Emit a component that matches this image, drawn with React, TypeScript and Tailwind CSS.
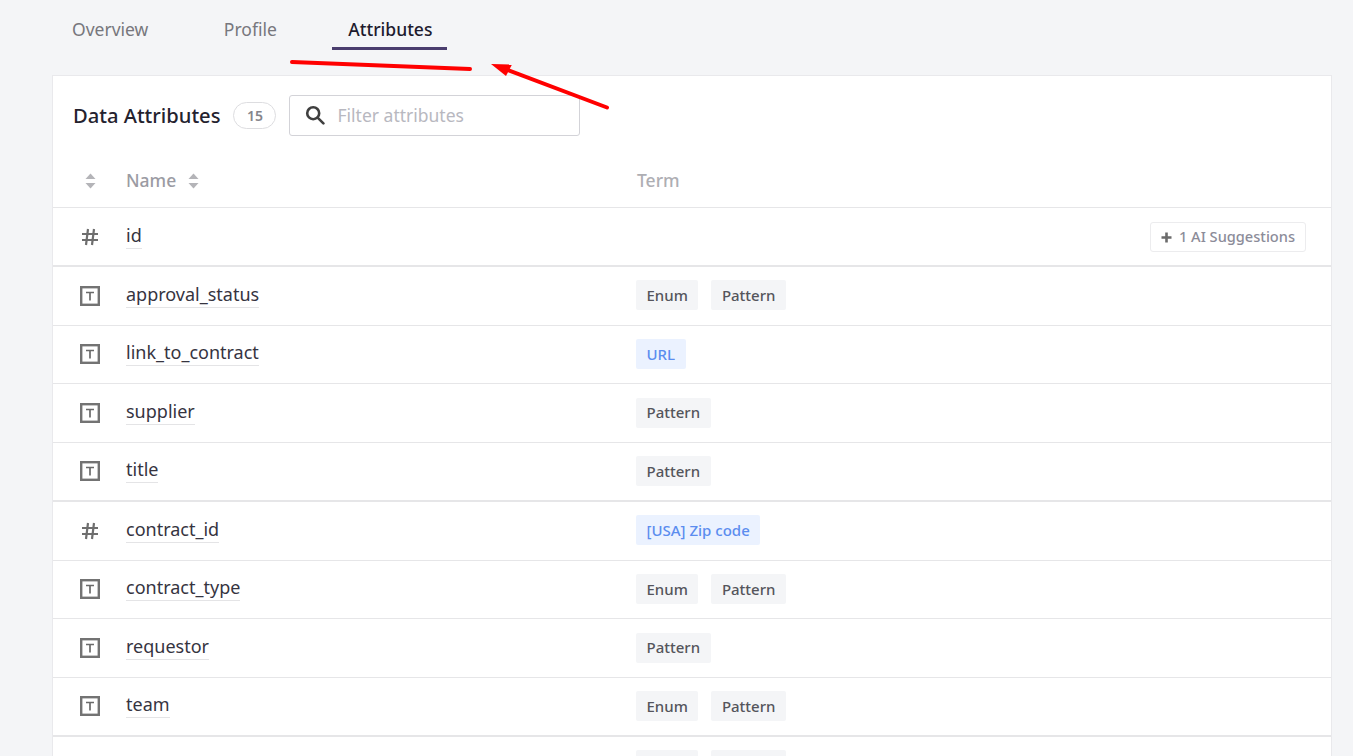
import React from "react";

type Tag = { label: string; blue?: boolean };
type Row = { name: string; kind: "num" | "text"; tags: Tag[]; thick?: boolean; ai?: boolean };

const E: Tag = { label: "Enum" };
const P: Tag = { label: "Pattern" };

const rows: Row[] = [
  { name: "id", kind: "num", tags: [], thick: true, ai: true },
  { name: "approval_status", kind: "text", tags: [E, P] },
  { name: "link_to_contract", kind: "text", tags: [{ label: "URL", blue: true }] },
  { name: "supplier", kind: "text", tags: [P] },
  { name: "title", kind: "text", tags: [P], thick: true },
  { name: "contract_id", kind: "num", tags: [{ label: "[USA] Zip code", blue: true }] },
  { name: "contract_type", kind: "text", tags: [E, P] },
  { name: "requestor", kind: "text", tags: [P] },
  { name: "team", kind: "text", tags: [E, P], thick: true },
  { name: "", kind: "text", tags: [E, P] },
];

function Sort() {
  return (
    <svg width="11" height="16" viewBox="0 0 11 16" fill="#b4b4b8">
      <path d="M5.5 0.5 L10.5 6 H0.5 Z" />
      <path d="M0.5 10 H10.5 L5.5 15.5 Z" />
    </svg>
  );
}

function TypeIcon({ kind }: { kind: Row["kind"] }) {
  if (kind === "num") {
    return (
      <svg width="18" height="18" viewBox="0 0 18 18" fill="none" stroke="#6e6e6e" strokeWidth="2.2">
        <path d="M7 1 L5 17 M13 1 L11 17 M1 6 H17 M1 12 H17" />
      </svg>
    );
  }
  return (
    <svg width="20" height="20" viewBox="0 0 20 20" fill="none">
      <rect x="1.2" y="1.2" width="17.6" height="17.6" stroke="#737373" strokeWidth="2.4" />
      <path d="M6 6.5 H14 M10 6.5 V14.5" stroke="#6a6a6a" strokeWidth="1.7" />
    </svg>
  );
}

export default function App() {
  return (
    <div className="relative h-[756px] overflow-hidden bg-[#f4f5f7] font-['Noto_Sans',sans-serif]">
      <nav className="flex h-[75px] gap-[35.5px] pl-[52px] pt-[15px] text-[17.5px]">
        <div className="h-[35px] px-5 leading-[28px] text-[#77777d]">Overview</div>
        <div className="h-[35px] px-5 leading-[28px] text-[#77777d]">Profile</div>
        <div className="h-[35px] w-[115px] whitespace-nowrap border-b-[3px] border-[#4a3d6e] px-4 font-medium leading-[28px] text-[#1e1b2e]">
          Attributes
        </div>
      </nav>

      <main className="mx-[52px] w-[1280px] border border-[#e9e9ec] bg-white">
        <div className="flex h-[81px] items-center pl-5 pb-[1px]">
          <h2 className="mb-[2px] text-[20.15px] font-medium leading-none text-[#24222e]">Data Attributes</h2>
          <span className="mb-[1px] ml-[13px] flex h-[27px] w-[43px] items-center justify-center rounded-full border border-[#dddde0] text-[14px] font-semibold text-[#85858b]">
            15
          </span>
          <label className="mb-[2px] ml-[13px] flex h-[41px] w-[291px] items-center rounded-[3px] border border-[#d3d3d8] pl-[15px]">
            <svg width="20" height="20" viewBox="0 0 20 20" fill="none" stroke="#3f3f3f" strokeWidth="2.6">
              <circle cx="8.2" cy="8.2" r="6" />
              <path d="M12.6 12.6 L18.4 18.4" strokeLinecap="round" />
            </svg>
            <span className="ml-[12px] text-[17.5px] text-[#b8b8c0]">Filter attributes</span>
          </label>
        </div>

        <div className="flex h-[51px] items-center border-b border-[#e6e6e8] pb-[3px] text-[17.5px] font-medium text-[#9b9ba3]">
          <div className="flex w-[73px] justify-center pl-[1px]">
            <Sort />
          </div>
          <div className="flex w-[510px] items-center gap-[12px]">
            Name
            <Sort />
          </div>
          <div className="pl-[1px] text-[#aeaeb3]">Term</div>
        </div>

        {rows.map((r, i) => (
          <div
            key={i}
            className={`flex h-[58.75px] items-center ${r.ai ? "pt-[2px]" : ""} ${r.thick ? "border-b-2" : "border-b"} border-[#e6e6e8]`}
          >
            <div className="flex w-[73px] justify-center pl-[1px]">
              <TypeIcon kind={r.kind} />
            </div>
            <div className="w-[510px] pb-[3px]">
              {r.name && (
                <span className="inline-block border-b border-[#e4e4e6] text-[18px] leading-[26px] text-[#36343f]">
                  {r.name}
                </span>
              )}
            </div>
            <div className="flex flex-1 items-center gap-[13px] pr-[25px]">
              {r.tags.map((t) => (
                <span
                  key={t.label}
                  className={`mb-[1px] flex h-[30px] items-center rounded-[2px] px-[10.5px] text-[15px] font-medium ${
                    t.blue ? "bg-[#ebf2ff] text-[#5b8def]" : "bg-[#f4f5f7] text-[#55555c]"
                  }`}
                >
                  {t.label}
                </span>
              ))}
              {r.ai && (
                <span className="ml-auto flex h-[30px] w-[156px] items-center justify-center gap-[7px] rounded-[3px] border border-[#ececee] text-[14.6px] font-medium text-[#8c8c99]">
                  <svg width="11" height="11" viewBox="0 0 11 11" fill="#6b6b6b">
                    <path d="M4.2 0.5 H6.8 V4.2 H10.5 V6.8 H6.8 V10.5 H4.2 V6.8 H0.5 V4.2 H4.2 Z" />
                  </svg>
                  1 AI Suggestions
                </span>
              )}
            </div>
          </div>
        ))}
      </main>

      <svg className="absolute left-0 top-0" width="1353" height="120" fill="none">
        <path d="M292 62 L470 69" stroke="#ff0000" strokeWidth="4" strokeLinecap="round" />
        <path d="M607 107.5 L505 69" stroke="#ff0000" strokeWidth="4" strokeLinecap="round" />
        <path d="M491 64 L512 64.5 L506 76 Z" fill="#ff0000" />
      </svg>
    </div>
  );
}
